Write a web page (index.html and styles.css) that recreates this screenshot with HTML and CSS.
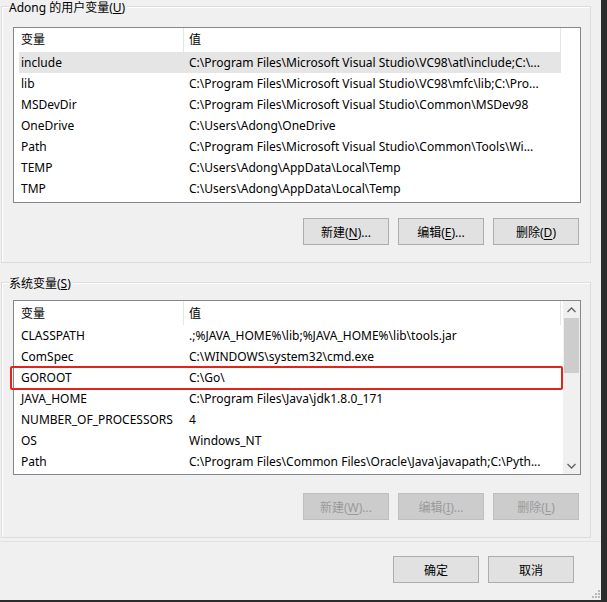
FILE: index.html
```html
<!DOCTYPE html>
<html lang="zh-CN">
<head>
<meta charset="utf-8">
<title>环境变量</title>
<link rel="stylesheet" href="styles.css">
</head>
<body>
<div class="dialog">
  <div class="group group-user">
    <div class="group-title">Adong 的用户变量(<u>U</u>)</div>
    <div class="list list-user">
      <div class="list-body">
        <div class="row header"><span class="c1">变量</span><span class="c2">值</span></div>
        <div class="row hl"><span class="c1">include</span><span class="c2">C:\Program Files\Microsoft Visual Studio\VC98\atl\include;C:\...</span></div>
        <div class="row"><span class="c1">lib</span><span class="c2">C:\Program Files\Microsoft Visual Studio\VC98\mfc\lib;C:\Pro...</span></div>
        <div class="row"><span class="c1">MSDevDir</span><span class="c2">C:\Program Files\Microsoft Visual Studio\Common\MSDev98</span></div>
        <div class="row"><span class="c1">OneDrive</span><span class="c2">C:\Users\Adong\OneDrive</span></div>
        <div class="row"><span class="c1">Path</span><span class="c2">C:\Program Files\Microsoft Visual Studio\Common\Tools\Wi...</span></div>
        <div class="row"><span class="c1">TEMP</span><span class="c2">C:\Users\Adong\AppData\Local\Temp</span></div>
        <div class="row"><span class="c1">TMP</span><span class="c2">C:\Users\Adong\AppData\Local\Temp</span></div>
      </div>
      <div class="vscroll blank"></div>
    </div>
    <div class="buttons">
      <button class="btn">新建(<u>N</u>)...</button>
      <button class="btn">编辑(<u>E</u>)...</button>
      <button class="btn">删除(<u>D</u>)</button>
    </div>
  </div>

  <div class="group group-sys">
    <div class="group-title">系统变量(<u>S</u>)</div>
    <div class="list list-sys">
      <div class="list-body">
        <div class="row header"><span class="c1">变量</span><span class="c2">值</span></div>
        <div class="row"><span class="c1">CLASSPATH</span><span class="c2">.;%JAVA_HOME%\lib;%JAVA_HOME%\lib\tools.jar</span></div>
        <div class="row"><span class="c1">ComSpec</span><span class="c2">C:\WINDOWS\system32\cmd.exe</span></div>
        <div class="row marked"><span class="c1">GOROOT</span><span class="c2">C:\Go\</span><span class="mark"></span></div>
        <div class="row"><span class="c1">JAVA_HOME</span><span class="c2">C:\Program Files\Java\jdk1.8.0_171</span></div>
        <div class="row"><span class="c1">NUMBER_OF_PROCESSORS</span><span class="c2">4</span></div>
        <div class="row"><span class="c1">OS</span><span class="c2">Windows_NT</span></div>
        <div class="row"><span class="c1">Path</span><span class="c2">C:\Program Files\Common Files\Oracle\Java\javapath;C:\Pyth...</span></div>
      </div>
      <div class="vscroll">
        <div class="arrow"><svg width="9" height="6" viewBox="0 0 9 6"><polyline points="0.5,5 4.5,1 8.5,5" fill="none" stroke="#606060" stroke-width="1.3"/></svg></div>
        <div class="track"><div class="thumb"></div></div>
        <div class="arrow"><svg width="9" height="6" viewBox="0 0 9 6"><polyline points="0.5,1 4.5,5 8.5,1" fill="none" stroke="#606060" stroke-width="1.3"/></svg></div>
      </div>
    </div>
    <div class="buttons">
      <button class="btn" disabled>新建(<u>W</u>)...</button>
      <button class="btn" disabled>编辑(<u>I</u>)...</button>
      <button class="btn" disabled>删除(<u>L</u>)</button>
    </div>
  </div>

  <div class="separator"></div>

  <div class="footer">
    <button class="btn">确定</button>
    <button class="btn">取消</button>
  </div>

  <div class="grip"><i></i><i></i><i></i><i></i><i></i><i></i></div>
</div>
</body>
</html>
```

FILE: styles.css
```css
* { box-sizing: border-box; }

html, body {
  margin: 0;
  padding: 0;
}

body {
  background: #2c2c2c;
  font-family: "Noto Sans", "Noto Sans CJK SC", sans-serif;
  font-size: 12px;
  color: #000;
}

.dialog {
  position: relative;
  width: 601px;
  height: 600px;
  background: #f0f0f0;
  padding: 6px 0 0 1px;
}

.group {
  width: 590px;
  border: 1px solid #dcdcdc;
  box-shadow: inset 1px 1px 0 #fff;
}

.group-user { height: 257px; }
.group-sys { height: 256px; margin-top: 19px; }

.group-title {
  display: table;
  margin: -7px 0 0 7px;
  padding: 0 2px 0 0;
  background: #f0f0f0;
  line-height: 16px;
  height: 16px;
  white-space: nowrap;
}

.list {
  display: flex;
  margin-left: 11px;
  width: 568px;
  background: #fff;
  border: 1px solid #828790;
  position: relative;
}

.list-user { height: 176px; margin-top: 11px; }
.list-sys { height: 175px; margin-top: 8px; }

.list-body {
  flex: 1;
  min-width: 0;
  padding: 0 2px 0 5px;
}

.row {
  display: flex;
  height: 21px;
  line-height: 21px;
  white-space: nowrap;
  position: relative;
}

.row.header {
  height: 24px;
  line-height: 24px;
}

.list-sys .row { line-height: 22px; }
.list-sys .row.header { line-height: 25px; }

.row.header .c1 { border-right: 1px solid #e5e5e5; }
.row.header .c2 { border-right: 1px solid #e5e5e5; }

.row.hl { background: #e5e5e5; }

.c1 {
  flex: none;
  width: 165px;
  padding-left: 2px;
  overflow: hidden;
}

.c2 {
  flex: 1;
  min-width: 0;
  padding-left: 5px;
  overflow: hidden;
}

.mark {
  position: absolute;
  left: -9px;
  top: -1px;
  width: 553px;
  height: 24px;
  border: 2px solid #e3241b;
  border-radius: 2px;
}

.vscroll {
  flex: none;
  width: 17px;
  display: flex;
  flex-direction: column;
}

.vscroll.blank { background: #fff; }

.vscroll .arrow {
  height: 17px;
  display: flex;
  align-items: center;
  justify-content: center;
  background: #f0f0f0;
}

.vscroll .track {
  flex: 1;
  background: #f0f0f0;
}

.vscroll .thumb {
  margin: 0 1px;
  height: 55px;
  background: #cdcdcd;
}

.buttons {
  display: flex;
  justify-content: flex-end;
  gap: 9px;
  padding-right: 11px;
}

.group-user .buttons { margin-top: 15px; }
.group-sys .buttons { margin-top: 18px; }

.btn {
  width: 86px;
  height: 27px;
  padding: 0;
  font: inherit;
  color: #000;
  background: #e1e1e1;
  border: 1px solid #adadad;
  border-radius: 0;
}

.btn u { text-decoration-thickness: 1px; text-underline-offset: 2px; }

.btn:disabled {
  background: #cccccc;
  border-color: #bfbfbf;
  color: #9a9a9a;
}

.separator {
  height: 2px;
  margin: 3px 0 0 -1px;
  width: 601px;
  border-top: 1px solid #e3e3e3;
}

.footer {
  display: flex;
  justify-content: flex-end;
  gap: 9px;
  margin-top: 13px;
  padding-right: 27px;
}

.grip {
  position: absolute;
  right: 1px;
  bottom: 2px;
  width: 8px;
  height: 8px;
}

.grip i {
  position: absolute;
  width: 2px;
  height: 2px;
  background: #b8b8b8;
}

.grip i:nth-child(1) { right: 0; bottom: 0; }
.grip i:nth-child(2) { right: 3px; bottom: 0; }
.grip i:nth-child(3) { right: 6px; bottom: 0; }
.grip i:nth-child(4) { right: 0; bottom: 3px; }
.grip i:nth-child(5) { right: 3px; bottom: 3px; }
.grip i:nth-child(6) { right: 0; bottom: 6px; }
```
